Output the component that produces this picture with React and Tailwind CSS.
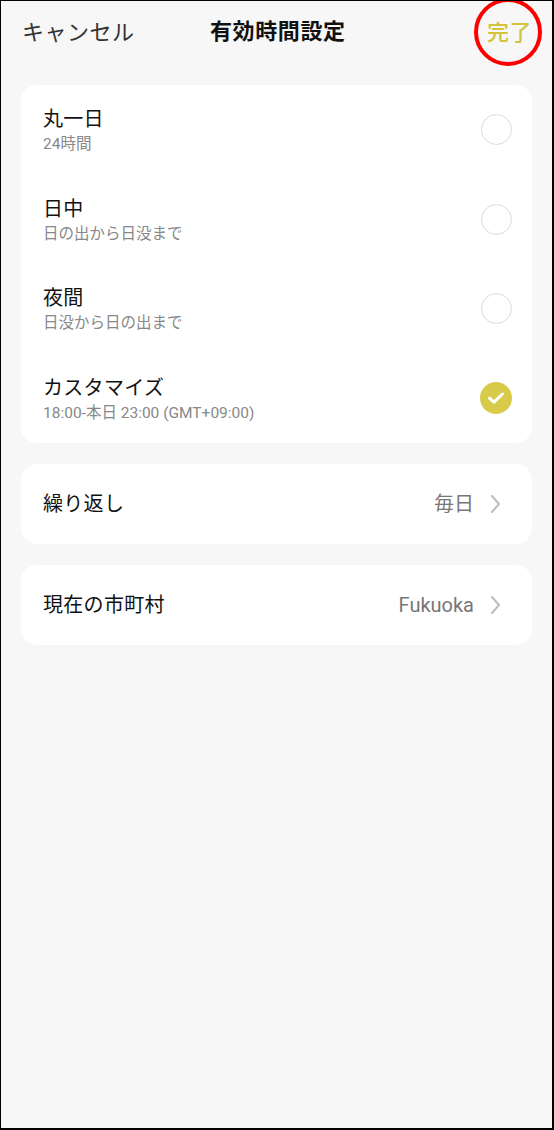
import React from "react";

const font = { fontFamily: '"Roboto", "Noto Sans CJK JP", sans-serif' };

function Radio({ checked }) {
  if (checked) {
    return (
      <div className="w-[32px] h-[32px] rounded-full bg-[#d8cb4a] flex items-center justify-center">
        <svg width="18" height="14" viewBox="0 0 18 14" fill="none">
          <path d="M2.5 7.2 L7 11.2 L15.5 3" stroke="white" strokeWidth="3" strokeLinecap="round" strokeLinejoin="round" />
        </svg>
      </div>
    );
  }
  return <div className="w-[31px] h-[31px] rounded-full border-[1.5px] border-[#dcdcdc] bg-white" />;
}

function Chevron() {
  return (
    <svg width="11" height="20" viewBox="0 0 11 20" fill="none">
      <path d="M2 2 L9 10 L2 18" stroke="#bdbdbd" strokeWidth="2" strokeLinecap="round" strokeLinejoin="round" />
    </svg>
  );
}

const options = [
  { title: "丸一日", sub: "24時間" },
  { title: "日中", sub: "日の出から日没まで" },
  { title: "夜間", sub: "日没から日の出まで" },
  { title: "カスタマイズ", sub: "18:00-本日 23:00 (GMT+09:00)", checked: true },
];

export default function App() {
  return (
    <div style={font} className="w-[554px] h-[1130px] bg-[#f7f7f7] border-l border-t border-r-2 border-b-2 border-black box-border overflow-hidden relative">
      <div className="h-[62px] relative flex items-center justify-between pl-[21px] pr-[20px]">
        <span className="text-[22px] text-[#333333] tracking-[0.5px]">キャンセル</span>
        <span className="absolute left-[209px] top-[16px] text-[22px] font-bold text-[#111111] tracking-[0.6px] leading-[30px]">有効時間設定</span>
        <span className="text-[22px] text-[#d4c43d] font-medium tracking-[0.5px]">完了</span>
        <div className="absolute left-[473px] top-[-3px] w-[68px] h-[68px] rounded-full border-[4.5px] border-[#ff0000]" />
      </div>
      <div className="px-[20px] pt-[22px] flex flex-col gap-[21px]">
        <div className="bg-white rounded-[16px] flex flex-col">
          {options.map((o) => (
            <div key={o.title} className="h-[89.5px] flex items-center justify-between pl-[22px] pr-[20px]">
              <div className="flex flex-col">
                <span className="text-[20px] leading-[28px] text-[#111111] tracking-[0.3px]">{o.title}</span>
                <span className="text-[15.5px] leading-[20px] mt-[1px] text-[#888888]">{o.sub}</span>
              </div>
              <Radio checked={o.checked} />
            </div>
          ))}
        </div>
        <div className="bg-white rounded-[16px] h-[80px] flex items-center justify-between pl-[22px] pr-[31px]">
          <span className="text-[20px] text-[#111111] tracking-[0.3px]">繰り返し</span>
          <div className="flex items-center gap-[16px]">
            <span className="text-[20px] text-[#777777]">毎日</span>
            <Chevron />
          </div>
        </div>
        <div className="bg-white rounded-[16px] h-[80px] flex items-center justify-between pl-[22px] pr-[31px]">
          <span className="text-[20px] text-[#111111] tracking-[0.3px]">現在の市町村</span>
          <div className="flex items-center gap-[16px]">
            <span className="text-[20px] text-[#777777]">Fukuoka</span>
            <Chevron />
          </div>
        </div>
      </div>
    </div>
  );
}
